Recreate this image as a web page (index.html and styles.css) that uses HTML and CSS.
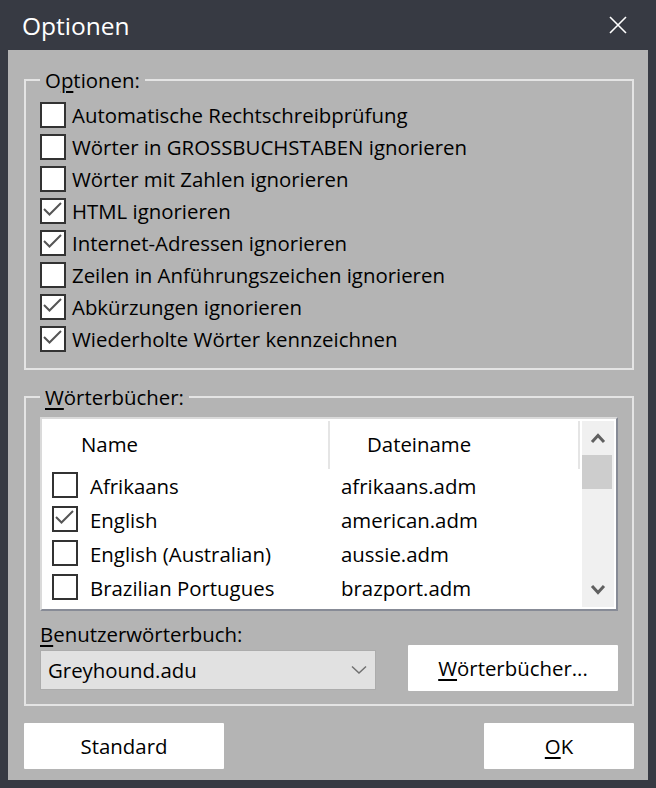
FILE: index.html
```html
<!DOCTYPE html>
<html lang="de">

<head>
    <meta charset="UTF-8">
    <title>Optionen</title>
    <link rel="stylesheet" href="styles.css">
</head>

<body>
    <div class="window">
        <div class="titlebar">
            <span class="title">Optionen</span>
            <svg class="close" width="20" height="20" viewBox="0 0 20 20">
                <path d="M2 2 L18 18 M18 2 L2 18" stroke="#fff" stroke-width="1.6" fill="none" />
            </svg>
        </div>

        <div class="dialog">
            <fieldset class="group group-options">
                <legend>O<u>p</u>tionen:</legend>
                <div class="check-row"><span class="box"></span>Automatische Rechtschreibprüfung</div>
                <div class="check-row"><span class="box"></span>Wörter in GROSSBUCHSTABEN ignorieren</div>
                <div class="check-row"><span class="box"></span>Wörter mit Zahlen ignorieren</div>
                <div class="check-row"><span class="box checked"><svg viewBox="0 0 26 26"><polyline points="4,11 9.5,16.5 21,5" /></svg></span>HTML ignorieren</div>
                <div class="check-row"><span class="box checked"><svg viewBox="0 0 26 26"><polyline points="4,11 9.5,16.5 21,5" /></svg></span>Internet-Adressen ignorieren</div>
                <div class="check-row"><span class="box"></span>Zeilen in Anführungszeichen ignorieren</div>
                <div class="check-row"><span class="box checked"><svg viewBox="0 0 26 26"><polyline points="4,11 9.5,16.5 21,5" /></svg></span>Abkürzungen ignorieren</div>
                <div class="check-row"><span class="box checked"><svg viewBox="0 0 26 26"><polyline points="4,11 9.5,16.5 21,5" /></svg></span>Wiederholte Wörter kennzeichnen</div>
            </fieldset>

            <fieldset class="group group-dicts">
                <legend><u>W</u>örterbücher:</legend>

                <div class="listview">
                    <div class="list-main">
                        <div class="list-header">
                            <div class="col-head col-name">Name</div>
                            <div class="col-head col-file">Dateiname</div>
                        </div>
                        <div class="list-row">
                            <span class="box"></span>
                            <span class="cell-name">Afrikaans</span>
                            <span class="cell-file">afrikaans.adm</span>
                        </div>
                        <div class="list-row">
                            <span class="box checked"><svg viewBox="0 0 26 26"><polyline points="4,11 9.5,16.5 21,5" /></svg></span>
                            <span class="cell-name">English</span>
                            <span class="cell-file">american.adm</span>
                        </div>
                        <div class="list-row">
                            <span class="box"></span>
                            <span class="cell-name">English (Australian)</span>
                            <span class="cell-file">aussie.adm</span>
                        </div>
                        <div class="list-row">
                            <span class="box"></span>
                            <span class="cell-name">Brazilian Portugues</span>
                            <span class="cell-file">brazport.adm</span>
                        </div>
                    </div>
                    <div class="scrollbar">
                        <div class="scroll-btn">
                            <svg width="16" height="12" viewBox="0 0 16 12"><polyline points="2,10 8,3.5 14,10" /></svg>
                        </div>
                        <div class="scroll-thumb"></div>
                        <div class="scroll-track"></div>
                        <div class="scroll-btn">
                            <svg width="16" height="12" viewBox="0 0 16 12"><polyline points="2,2 8,8.5 14,2" /></svg>
                        </div>
                    </div>
                </div>

                <div class="user-label"><u>B</u>enutzerwörterbuch:</div>
                <div class="user-row">
                    <div class="combobox">
                        <span>Greyhound.adu</span>
                        <svg width="16" height="10" viewBox="0 0 16 10"><polyline points="1,1.5 8,8 15,1.5" /></svg>
                    </div>
                    <button class="btn btn-dicts"><u>W</u>örterbücher...</button>
                </div>
            </fieldset>

            <div class="footer">
                <button class="btn btn-standard">Standard</button>
                <button class="btn btn-ok"><u>O</u>K</button>
            </div>
        </div>
    </div>
</body>

</html>
```

FILE: styles.css
```css
body {
    margin: 0;
    font-family: "Open Sans", "Noto Sans", sans-serif;
    font-size: 20.4px;
    color: #000;
}

u {
    text-decoration-thickness: 2px;
    text-underline-offset: 3px;
}

.window {
    width: 656px;
    height: 788px;
    background-color: #373a43;
    display: flex;
    flex-direction: column;
}

.titlebar {
    height: 50px;
    display: flex;
    align-items: center;
    justify-content: space-between;
    padding: 0 28px 0 22px;
    color: #fff;
}

.title {
    font-size: 24.5px;
}

.close {
    display: block;
}

.dialog {
    flex: 1;
    margin: 0 8px 8px;
    background-color: #b4b4b4;
}

.group {
    border: 2px solid #e4e4e4;
    margin: 0 14px 0 16px;
    padding: 0 14px;
    min-width: 0;
}

.group legend {
    padding: 0 5px;
    line-height: 28px;
}

.group-options {
    margin-top: 16px;
    padding-top: 5px;
    padding-bottom: 13px;
}

.group-dicts {
    margin-top: 13px;
    padding-top: 6px;
    padding-bottom: 13px;
}

.check-row {
    display: flex;
    align-items: center;
    gap: 6px;
    height: 32px;
}

.box {
    width: 26px;
    height: 26px;
    border: 2px solid #333;
    background-color: #fff;
    box-sizing: border-box;
    flex-shrink: 0;
    position: relative;
}

.box svg {
    position: absolute;
    left: -2px;
    top: -2px;
    width: 26px;
    height: 26px;
}

.box polyline {
    fill: none;
    stroke: #555;
    stroke-width: 2;
}

/* list view */
.listview {
    height: 194px;
    box-sizing: border-box;
    border: 2px solid;
    border-color: #dadada #878b96 #878b96 #dadada;
    background-color: #fff;
    display: flex;
}

.list-main {
    flex: 1;
}

.list-header {
    height: 50px;
    display: flex;
}

.col-head {
    height: 48px;
    margin-top: 2px;
    box-sizing: border-box;
    border-right: 2px solid #e5e5e5;
    display: flex;
    align-items: center;
    padding-bottom: 2px;
}

.col-name {
    width: 288px;
    padding-left: 39px;
}

.col-file {
    width: 250px;
    padding-left: 37px;
}

.list-row {
    height: 34px;
    display: flex;
    align-items: center;
    padding-left: 10px;
}

.list-row .box {
    margin-top: -3px;
}

.cell-name {
    width: 251px;
    margin-left: 12px;
}

.scrollbar {
    width: 32px;
    margin: 2px 2px 2px 0;
    background-color: #f0f0f0;
    display: flex;
    flex-direction: column;
}

.scroll-btn {
    height: 34px;
    display: flex;
    align-items: center;
    justify-content: center;
}

.scroll-btn polyline {
    fill: none;
    stroke: #606060;
    stroke-width: 3;
}

.scroll-thumb {
    height: 34px;
    width: 30px;
    background-color: #cdcdcd;
}

.scroll-track {
    flex: 1;
}

/* user dictionary */
.user-label {
    margin-top: 12px;
    line-height: 22px;
}

.user-row {
    display: flex;
    align-items: flex-end;
    justify-content: space-between;
    height: 46px;
}

.combobox {
    width: 336px;
    height: 40px;
    margin-bottom: 1px;
    box-sizing: border-box;
    border: 1px solid #acacac;
    background-color: #e1e1e1;
    display: flex;
    align-items: center;
    justify-content: space-between;
    padding: 0 8px 0 7px;
}

.combobox polyline {
    fill: none;
    stroke: #707070;
    stroke-width: 1.5;
}

.btn {
    font-family: inherit;
    font-size: 20.4px;
    color: #000;
    background-color: #fff;
    border: none;
    border-radius: 1px;
    height: 46px;
    padding: 0;
}

.btn-dicts {
    width: 210px;
}

.footer {
    display: flex;
    justify-content: space-between;
    margin: 17px 14px 0 16px;
}

.btn-standard {
    width: 200px;
}

.btn-ok {
    width: 150px;
}
```
